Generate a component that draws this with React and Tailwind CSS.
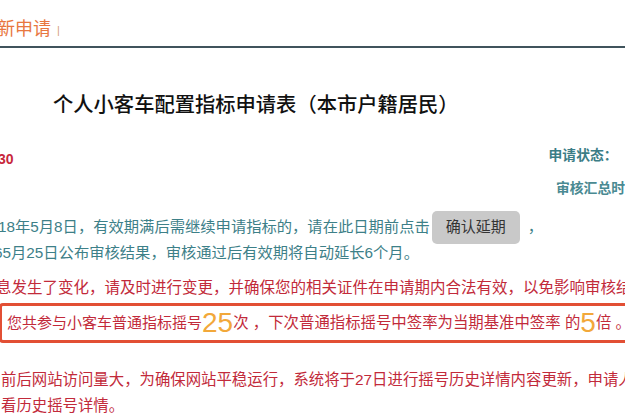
import React from "react";

export default function App() {
  const font = "font-['Liberation_Sans','Noto_Sans_CJK_SC',sans-serif]";
  return (
    <div className={`w-[625px] h-[417px] overflow-hidden bg-white ${font}`}>
      {/* header tab */}
      <div className="h-[46px] flex items-center pt-[12px] whitespace-nowrap">
        <span className="-ml-[3px] text-[18px] leading-[18px] text-[#e8773f]">新申请</span>
        <span className="ml-[6px] mt-[3px] text-[11px] leading-[11px] text-[#d8a080]">|</span>
      </div>
      <div className="h-[2px] bg-[#40535c]" />

      {/* title */}
      <div className="mt-[47px] pl-[53px] text-[20.3px] leading-[20px] font-medium text-[#111] whitespace-nowrap">
        个人小客车配置指标申请表（本市户籍居民）
      </div>

      {/* status row */}
      <div className="flex items-start whitespace-nowrap h-[49px]">
        <span className="mt-[37px] -ml-[2px] text-[14px] leading-[14px] font-bold text-[#c8283c]">30</span>
        <span className="mt-[34px] ml-[535px] text-[13.8px] leading-[14px] font-bold text-[#3b7d86]">申请状态：</span>
      </div>
      <div className="pl-[556px] mt-[18px] text-[13.8px] leading-[14px] font-semibold text-[#4a8a92] whitespace-nowrap">
        审核汇总时
      </div>

      {/* teal lines */}
      <div className="mt-[18px] h-[26px] flex items-center whitespace-nowrap text-[15.3px] text-[#3d8088]">
        <span className="-ml-[2px]">18年5月8日，有效期满后需继续申请指标的，请在此日期前点击</span>
        <span className="ml-[2px] inline-flex items-center justify-center w-[88px] h-[33px] rounded-[5px] bg-[#c9c9c9] text-[#333] text-[15px]">
          确认延期
        </span>
        <span className="ml-[8px]">，</span>
      </div>
      <div className="h-[26px] flex items-center whitespace-nowrap text-[15.3px] text-[#3d8088]">
        <span className="-ml-[6px]">65月25日公布审核结果，审核通过后有效期将自动延长6个月。</span>
      </div>

      {/* red line */}
      <div className="mt-[9px] h-[26px] flex items-center whitespace-nowrap text-[15.5px] text-[#c22a3a]">
        <span className="-ml-[4px]">息发生了变化，请及时进行变更，并确保您的相关证件在申请期内合法有效，以免影响审核结果。</span>
      </div>

      {/* highlighted box */}
      <div className="mt-[2px] -ml-[1px] w-[680px] h-[40px] border-[3px] border-[#e24f34] rounded-[4px] flex items-center whitespace-nowrap text-[#c22a3a]">
        <span className="ml-[5px] text-[15px]">您共参与小客车普通指标摇号</span>
        <span className="text-[28px] leading-[28px] text-[#f2a83a]">25</span>
        <span className="text-[15.4px]">次 ，下次普通指标摇号中签率为当期基准中签率 的</span>
        <span className="text-[28px] leading-[28px] text-[#f2a83a]">5</span>
        <span className="text-[15.4px]">倍 。</span>
      </div>

      {/* red lines bottom */}
      <div className="mt-[24px] h-[26px] flex items-center whitespace-nowrap text-[15.4px] text-[#c22a3a]">
        <span className="ml-[1px]">前后网站访问量大，为确保网站平稳运行，系统将于27日进行摇号历史详情内容更新，申请人</span>
      </div>
      <div className="h-[26px] flex items-center whitespace-nowrap text-[15.4px] text-[#c22a3a]">
        <span className="ml-[1px]">看历史摇号详情。</span>
      </div>
    </div>
  );
}
